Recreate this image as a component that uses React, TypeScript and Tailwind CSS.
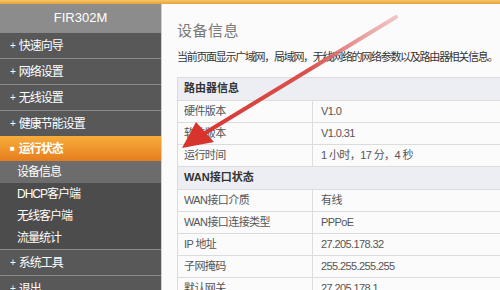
const mainMenu = [
  { label: '快速向导' },
  { label: '网络设置' },
  { label: '无线设置' },
  { label: '健康节能设置' },
];

const subMenu = ['设备信息', 'DHCP客户端', '无线客户端', '流量统计'];

const routerRows = [
  ['硬件版本', 'V1.0'],
  ['软件版本', 'V1.0.31'],
  ['运行时间', '1 小时，17 分，4 秒'],
];

const wanRows = [
  ['WAN接口介质', '有线'],
  ['WAN接口连接类型', 'PPPoE'],
  ['IP 地址', '27.205.178.32'],
  ['子网掩码', '255.255.255.255'],
  ['默认网关', '27.205.178.1'],
];

function MenuItem({ label }: { label: string }) {
  return (
    <div className="h-[26px] flex items-center pl-[10px] text-[12px] tracking-[-1px] text-white border-t border-[#8a8a8a] bg-[#585858]">
      <span className="mr-[4px] text-[10px]">+</span>
      {label}
    </div>
  );
}

function Row({ k, v }: { k: string; v: string }) {
  return (
    <div className="flex h-[22px] border-b border-[#dcdcdc] text-[11px] tracking-[-0.6px] text-[#555]">
      <div className="w-[135px] pl-[6px] flex items-center border-r border-[#dcdcdc]">{k}</div>
      <div className="flex-1 pl-[8px] flex items-center">{v}</div>
    </div>
  );
}

export default function App() {
  return (
    <div
      className="relative w-[500px] h-[290px] overflow-hidden bg-[#fbfbfb]"
      style={{ fontFamily: '"Liberation Sans", "Noto Sans CJK SC", sans-serif' }}
    >
      <div className="h-[4px] bg-gradient-to-b from-[#f5c66a] to-[#e6a030]" />
      <div className="flex">
        {/* sidebar */}
        <div className="w-[162px] shrink-0 bg-[#585858] h-[286px] border-r border-[#d0d0d0]">
          <div className="h-[28px] bg-[#8c8c8c] flex items-center justify-center text-white text-[13px]">FIR302M</div>
          {mainMenu.map((m) => (
            <MenuItem key={m.label} label={m.label} />
          ))}
          <div className="h-[25px] flex items-center pl-[10px] text-[12px] tracking-[-1px] font-bold text-white bg-gradient-to-b from-[#f6ad3c] to-[#e77d1c]">
            <span className="mr-[5px] text-[8px]">■</span>
            运行状态
          </div>
          <div className="bg-[#4c4c4c]">
            {subMenu.map((s, i) => (
              <div
                key={s}
                className={`h-[22px] flex items-center pl-[17px] text-[12px] tracking-[-1px] text-white ${i === 0 ? 'bg-[#6c6c6c]' : ''}`}
              >
                {s}
              </div>
            ))}
          </div>
          <MenuItem label="系统工具" />
          <MenuItem label="退出" />
        </div>

        {/* content */}
        <div className="flex-1 pl-[15px] pt-[16px]">
          <div className="text-[15px] text-[#7a7a7a] leading-[22px] tracking-[0.5px]">设备信息</div>
          <div className="text-[11px] tracking-[-1.3px] text-[#333] mt-[7px] whitespace-nowrap">
            当前页面显示广域网，局域网，无线网络的网络参数以及路由器相关信息。
          </div>
          <div className="mt-[11px] w-[340px] border-l border-t border-[#dcdcdc]">
            <div className="h-[23px] bg-[#eceef3] border-b border-[#dcdcdc] flex items-center pl-[6px] text-[11px] font-bold text-[#333]">
              路由器信息
            </div>
            {routerRows.map(([k, v]) => (
              <Row key={k} k={k} v={v} />
            ))}
            <div className="h-[23px] bg-[#eceef3] border-b border-[#dcdcdc] flex items-center pl-[6px] text-[11px] font-bold text-[#333]">
              WAN接口状态
            </div>
            {wanRows.map(([k, v]) => (
              <Row key={k} k={k} v={v} />
            ))}
          </div>
        </div>
      </div>

      {/* red arrow annotation */}
      <svg className="absolute left-0 top-0" width="500" height="290" viewBox="0 0 500 290">
        <defs>
          <linearGradient id="arr" x1="395" y1="18" x2="183" y2="148" gradientUnits="userSpaceOnUse">
            <stop offset="0" stopColor="#e8a0a0" stopOpacity="0.6" />
            <stop offset="0.4" stopColor="#d9534f" />
            <stop offset="1" stopColor="#d8322c" />
          </linearGradient>
        </defs>
        <path d="M396 17 L205 133" stroke="url(#arr)" strokeWidth="4" strokeLinecap="round" fill="none" />
        <polygon points="182,148 196,122 214,142" fill="#d8342e" />
      </svg>
    </div>
  );
}
